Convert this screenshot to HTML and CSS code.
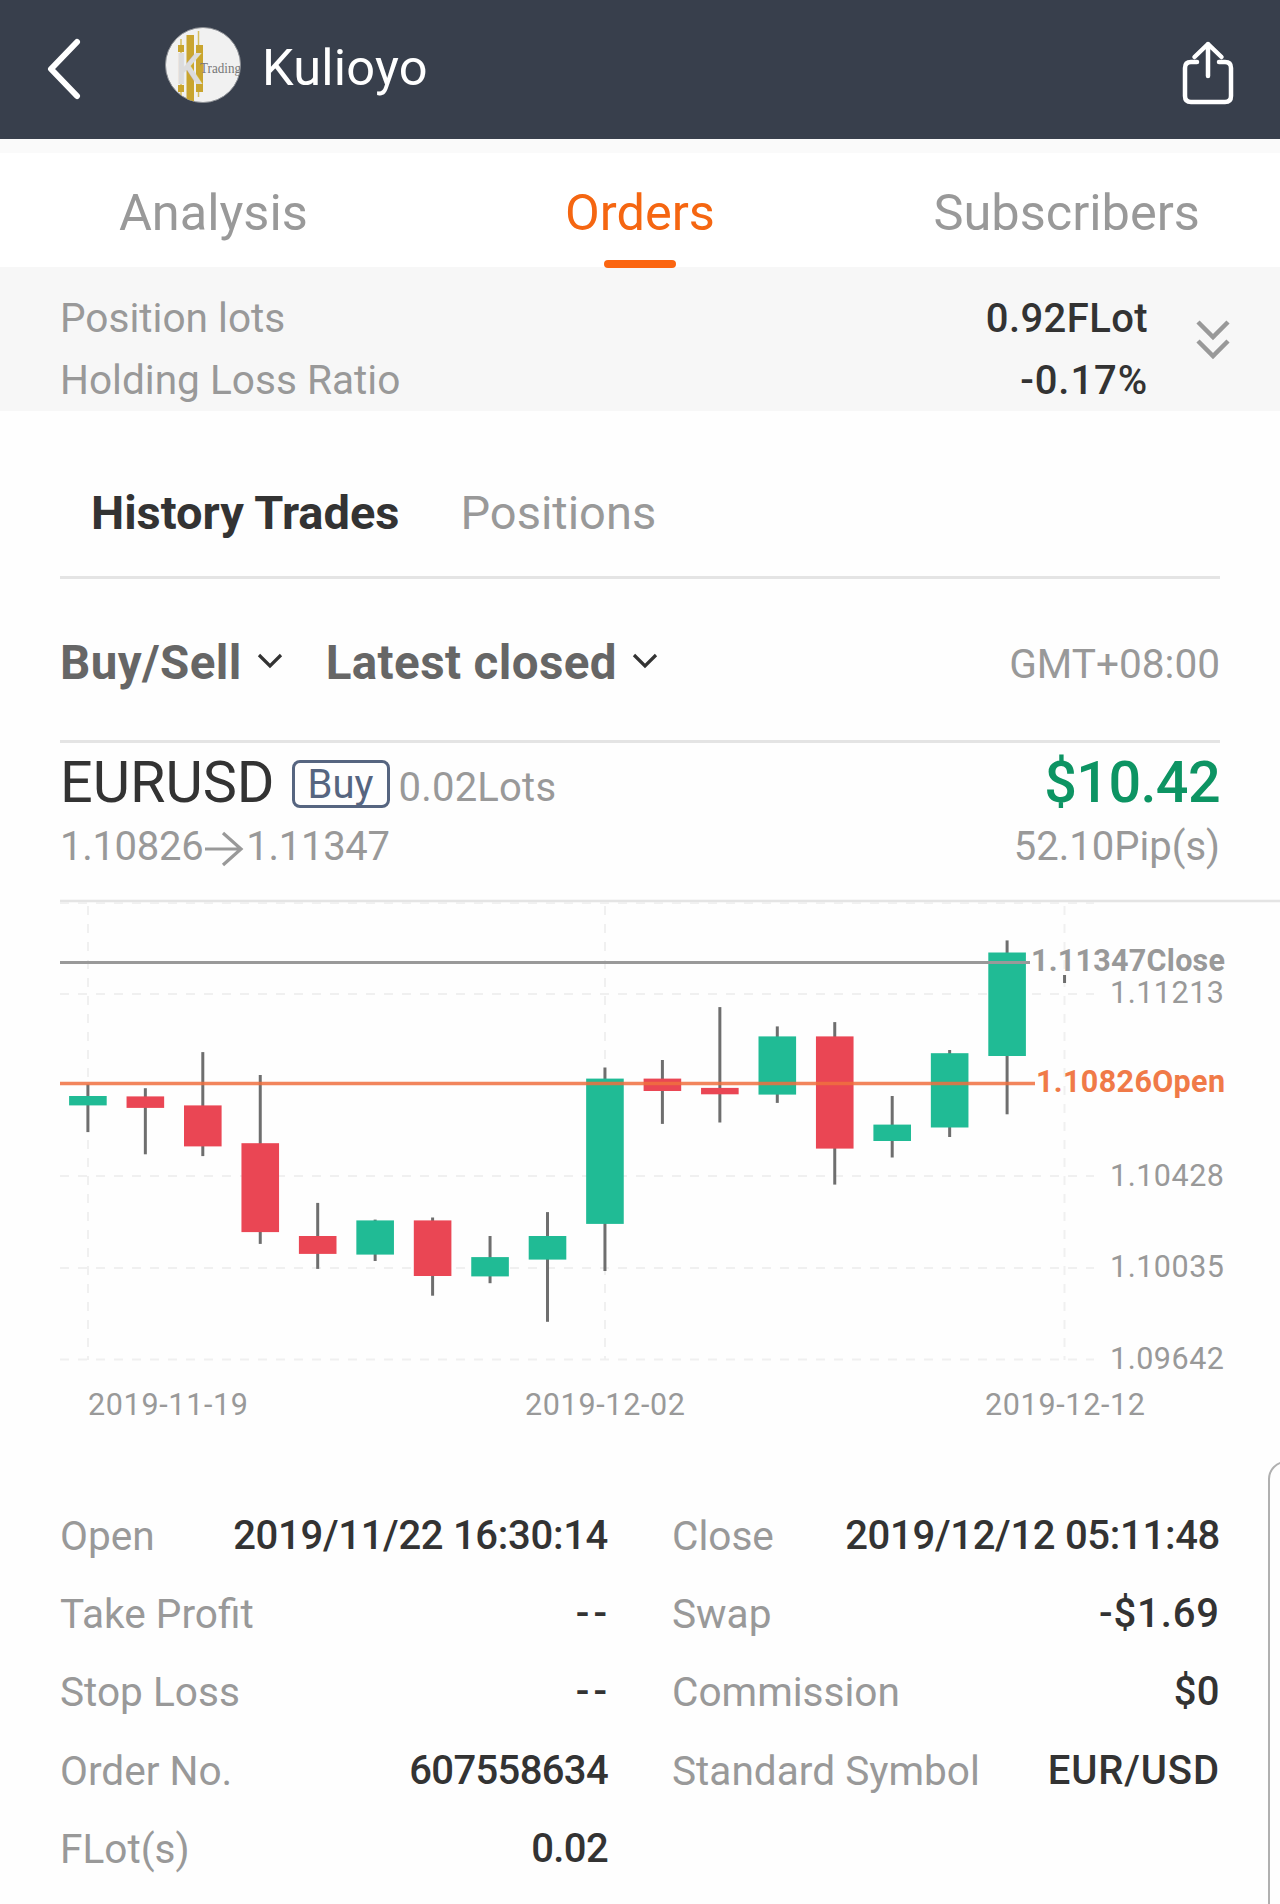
FILE: index.html
```html
<!DOCTYPE html>
<html lang="en">
<head>
    <meta charset="UTF-8">
    <meta name="viewport" content="width=device-width, initial-scale=1.0">
    <title>Kulioyo - Orders</title>
    <link rel="stylesheet" href="styles.css">
</head>
<body>

<!-- Top bar -->
<header class="topbar">
    <svg class="back" width="36" height="64" viewBox="0 0 36 64">
        <path d="M32 5 L6 32 L32 59"/>
    </svg>
    <svg class="avatar" width="78" height="78" viewBox="-1 -1 78 78">
        <defs>
            <clipPath id="round"><circle cx="38" cy="38" r="37.5"/></clipPath>
        </defs>
        <circle class="avatar-bg" cx="38" cy="38" r="37.5"/>
        <g clip-path="url(#round)">
            <path class="avatar-wick" d="M16 12 V70 M33.5 4 V70"/>
            <path class="avatar-gold" d="M13 18h6v7h-6z M13 58h6v7h-6z M21.500 8h7.500v68h-7.500z M31 18h7v47h-7z"/>
            <text class="avatar-k" x="11" y="57" textLength="27" lengthAdjust="spacingAndGlyphs">K</text>
            <text class="avatar-word" x="35" y="46" textLength="41" lengthAdjust="spacingAndGlyphs">Trading</text>
        </g>
    </svg>
    <h1>Kulioyo</h1>
    <svg class="share" width="52" height="66" viewBox="0 0 52 66">
        <path d="M15 22 H9 Q3 22 3 28 V56 Q3 62 9 62 H43 Q49 62 49 56 V28 Q49 22 43 22 H37"/>
        <path d="M26 4 V36 M12.500 17 L26 4 L39.500 17"/>
    </svg>
</header>

<!-- Main tabs -->
<nav class="tabs">
    <a class="tab">Analysis</a>
    <a class="tab active">Orders</a>
    <a class="tab">Subscribers</a>
</nav>

<!-- Account summary -->
<section class="summary">
    <div class="summary-rows">
        <div class="row"><span>Position lots</span><b class="num flot">0.92FLot</b></div>
        <div class="row"><span>Holding Loss Ratio</span><b class="num loose">-0.17%</b></div>
    </div>
    <svg class="expand" width="34" height="44" viewBox="0 0 34 44">
        <path d="M2 4 L17 19 L32 4 M2 23 L17 38 L32 23"/>
    </svg>
</section>

<div class="subtabs">
    <span class="subtab active">History Trades</span>
    <span class="subtab">Positions</span>
</div>

<div class="filters">
    <span class="filter type">Buy/Sell</span>
    <svg class="caret" width="26" height="18" viewBox="0 0 26 18"><path d="M2 2 L13 13 L24 2"/></svg>
    <span class="filter sort">Latest closed</span>
    <svg class="caret" width="26" height="18" viewBox="0 0 26 18"><path d="M2 2 L13 13 L24 2"/></svg>
    <span class="zone">GMT+08:00</span>
</div>

<!-- Order -->
<section class="order">
    <div class="order-main">
        <span class="symbol">EURUSD</span>
        <span class="side">Buy</span>
        <span class="lots">0.02Lots</span>
        <span class="profit">$10.42</span>
    </div>
    <div class="order-sub">
        <span class="price">1.10826</span>
        <svg class="arrow" width="40" height="36" viewBox="0 0 40 36"><path d="M1 18 H37 M19 2 L37 18 L19 34"/></svg>
        <span class="price">1.11347</span>
        <span class="pips">52.10Pip(s)</span>
    </div>
</section>

<svg class="chart" width="1280" height="541" viewBox="0 899 1280 541">
    <path class="edge" d="M60 901 H1280"/>
    <path class="grid" d="M60 903 H1094 M60 994 H1094 M60 1176 H1094 M60 1268 H1094 M60 1359.500 H1094"/>
    <path class="grid" d="M88 906 V1360 M605 906 V1360 M1064.500 906 V1360"/>
    <g id="candles"></g>
    <path class="close-line" d="M60 962.500 H1030"/>
    <path class="open-line" d="M60 1083.600 H1035"/>

    <text class="tag close" x="1031" y="971" textLength="194">1.11347Close</text>
    <text class="tag open" x="1036" y="1092" textLength="189">1.10826Open</text>

    <text x="1110" y="1002.500" textLength="114">1.11213</text>
    <text x="1110" y="1185.500" textLength="114">1.10428</text>
    <text x="1110" y="1277" textLength="114">1.10035</text>
    <text x="1110" y="1368.500" textLength="114">1.09642</text>

    <text x="88" y="1415" textLength="160">2019-11-19</text>
    <text x="525" y="1415" textLength="160">2019-12-02</text>
    <text x="985" y="1415" textLength="160">2019-12-12</text>
</svg>

<!-- Order details -->
<section class="details">
    <div class="col">
        <div class="row"><span>Open</span><b class="num">2019/11/22 16:30:14</b></div>
        <div class="row"><span>Take Profit</span><b class="num dash">--</b></div>
        <div class="row"><span>Stop Loss</span><b class="num dash">--</b></div>
        <div class="row"><span>Order No.</span><b class="num tight">607558634</b></div>
        <div class="row"><span>FLot(s)</span><b class="num tight">0.02</b></div>
    </div>
    <div class="col">
        <div class="row"><span>Close</span><b class="num">2019/12/12 05:11:48</b></div>
        <div class="row"><span>Swap</span><b class="num loose">-$1.69</b></div>
        <div class="row"><span>Commission</span><b class="num flot">$0</b></div>
        <div class="row"><span>Standard Symbol</span><b class="num loose">EUR/USD</b></div>
    </div>
</section>

<div class="edge-panel"></div>

<script>
    // [direction, body top, body bottom, wick top, wick bottom]
    const candles = [
        ["up", 1096, 1105.4, 1084.3, 1132.1],
        ["down", 1096.4, 1107.9, 1088.2, 1154.3],
        ["down", 1105.4, 1146.4, 1052.1, 1156.1],
        ["down", 1143.2, 1232.1, 1075, 1243.9],
        ["down", 1236, 1253.9, 1202.9, 1268.9],
        ["up", 1220.4, 1254.6, 1219.6, 1261],
        ["down", 1220.4, 1276, 1217.5, 1295.7],
        ["up", 1257.1, 1276.4, 1236, 1283.2],
        ["up", 1236, 1259.6, 1212.1, 1321.8],
        ["up", 1078.6, 1223.9, 1067.5, 1271],
        ["down", 1078.6, 1091, 1060, 1123.9],
        ["down", 1087.9, 1094.3, 1007.1, 1122.5],
        ["up", 1036.4, 1094.6, 1026.4, 1102.9],
        ["down", 1036.4, 1148.6, 1022.1, 1184.6],
        ["up", 1124.6, 1141, 1096, 1157.5],
        ["up", 1053.2, 1127.5, 1050, 1137],
        ["up", 952.5, 1056, 940.4, 1114.3],
        ["up", 975, 975, 975, 983]
    ];

    document.querySelector("#candles").innerHTML = candles.map(([dir, top, bottom, high, low], i) => {
        const x = 87.9 + i * 57.45;
        return `
            <path class="wick" d="M${x} ${high} V${low}"/>
            <rect class="${dir}" x="${x - 18.8}" y="${top}" width="37.6" height="${bottom - top}"/>
        `;
    }).join('');
</script>

</body>
</html>
```
FILE: styles.css
```css
* {
    box-sizing: border-box;
    margin: 0;
    padding: 0;
}

:root {
    --bar: #383f4c;
    --orange: #f56611;
    --dark: #333333;
    --grey: #999999;
    --line: #e4e4e4;
    --green: #0d9463;
}

body {
    width: 1280px;
    height: 1904px;
    overflow: hidden;
    position: relative;
    background: #fefefe;
    color: var(--grey);
    font-family: Roboto, "Liberation Sans", sans-serif;
    font-size: 40.6px;
}

svg {
    display: block;
    flex: none;
}

svg path {
    fill: none;
}

/* Top bar */
.topbar {
    height: 139px;
    padding: 0 46px 0 45px;
    display: flex;
    align-items: center;
    background: var(--bar);
    color: #fff;
}

.back {
    margin-top: -2px;
}

.back path {
    stroke: #fff;
    stroke-width: 6;
    stroke-linecap: round;
    stroke-linejoin: round;
}

.avatar {
    margin: -10px 0 0 83px;
}

.avatar-bg {
    fill: #f1f1f1;
    stroke: #8b8e93;
}

.avatar .avatar-wick {
    stroke: #d5bd5c;
    stroke-width: 1.5;
}

.avatar .avatar-gold {
    fill: #c9a52f;
}

.avatar-k {
    font: bold 45px "Liberation Sans", sans-serif;
    fill: #dcdcdd;
}

.avatar-word {
    font: 14px "Liberation Serif", serif;
    fill: #777;
}

.topbar h1 {
    margin: -4px auto 0 20px;
    font-size: 50.5px;
    font-weight: 400;
    letter-spacing: 0.2px;
}

.share {
    margin-top: 7px;
}

.share path {
    stroke: #fff;
    stroke-width: 4.5;
    stroke-linecap: round;
    stroke-linejoin: round;
}

/* Tabs */
.tabs {
    height: 128px;
    padding-top: 6px;
    border-top: 14px solid #fafafa;
    display: grid;
    grid-template-columns: repeat(3, 1fr);
    background: #fff;
    font-size: 50.5px;
    line-height: 108px;
    text-align: center;
}

.tab {
    position: relative;
}

.tab.active {
    color: var(--orange);
}

.tab.active::after {
    content: "";
    position: absolute;
    left: 50%;
    bottom: -1px;
    width: 72px;
    height: 8px;
    margin-left: -36px;
    border-radius: 4px;
    background: #fb6510;
}

/* Summary */
.summary {
    height: 144px;
    padding: 21px 50px 0 60px;
    display: flex;
    background: #f7f7f7;
}

.summary-rows {
    width: 1088px;
    line-height: 61.5px;
}

.row {
    display: flex;
    justify-content: space-between;
    white-space: nowrap;
}

.num {
    color: var(--dark);
    font-size: 40px;
    font-weight: 500;
    letter-spacing: -0.3px;
}

.num.flot {
    letter-spacing: 0.4px;
}

.num.loose {
    letter-spacing: 0.9px;
}

.num.tight {
    letter-spacing: -0.65px;
}

.num.dash {
    margin-right: -3px;
    letter-spacing: 4px;
}

.expand {
    margin: 30px 0 0 auto;
}

.expand path {
    stroke: #999;
    stroke-width: 4.5;
}

/* History / positions switch */
.subtabs {
    height: 168px;
    margin: 0 60px;
    padding: 72px 0 0 31px;
    border-bottom: 3px solid var(--line);
    display: flex;
    gap: 61px;
    font-size: 47px;
    line-height: 60px;
}

.subtab.active {
    color: var(--dark);
    font-weight: 700;
}

/* Filters */
.filters {
    height: 164px;
    margin: 0 60px;
    padding-top: 54px;
    border-bottom: 3px solid var(--line);
    display: flex;
    line-height: 60px;
}

.filter {
    color: #666;
    font-size: 47.5px;
    font-weight: 700;
    letter-spacing: 0.4px;
}

.filter.sort {
    margin-left: 43px;
}

.caret {
    margin: 20px 0 0 15px;
}

.caret path {
    stroke: #333;
    stroke-width: 3.2;
}

.zone {
    padding-top: 1px;
    margin-left: auto;
}

/* Order heading */
.order {
    height: 156px;
    padding: 10px 60px 0;
}

.order-main,
.order-sub {
    display: flex;
}

.order-main {
    line-height: 60px;
}

.symbol {
    color: var(--dark);
    font-size: 57.5px;
}

.side {
    width: 98px;
    height: 48px;
    margin: 7px 9px 0 17px;
    border: 3px solid #566580;
    border-radius: 8px;
    color: #566580;
    font-size: 40px;
    line-height: 43px;
    text-align: center;
}

.lots {
    padding-top: 5px;
    font-size: 40px;
    letter-spacing: 0.2px;
}

.profit {
    margin-left: auto;
    color: var(--green);
    font-size: 57.5px;
    font-weight: 500;
    letter-spacing: -0.6px;
}

.order-sub {
    margin-top: 1px;
    font-size: 40px;
    line-height: 56px;
}

.price {
    letter-spacing: -0.3px;
}

.arrow {
    margin: 12px 2px 0 1px;
}

.arrow path {
    stroke: #999;
    stroke-width: 3.2;
}

.pips {
    margin-left: auto;
}

/* Chart */
.chart text {
    fill: #999;
    font-size: 30.5px;
}

.chart .tag {
    font-weight: 700;
}

.chart .tag.open {
    fill: #f07a48;
}

.edge {
    stroke: var(--line);
    stroke-width: 2.5;
}

.grid {
    stroke: #f0f0f0;
    stroke-width: 2;
    stroke-dasharray: 9 9;
}

.wick {
    stroke: #6e6e6e;
    stroke-width: 3;
}

.up {
    fill: #20bb95;
}

.down {
    fill: #ea4654;
}

.close-line {
    stroke: #999;
    stroke-width: 3;
}

.open-line {
    stroke: #f07040;
    stroke-opacity: 0.85;
    stroke-width: 3.5;
}

/* Details */
.details {
    padding: 57px 60px 0;
    display: grid;
    grid-template-columns: 1fr 1fr;
    column-gap: 64px;
    line-height: 78.2px;
}

.edge-panel {
    position: absolute;
    top: 1461px;
    right: -30px;
    width: 42px;
    height: 500px;
    border: 2px solid #b0b0b0;
    border-radius: 18px;
    background: #fefefe;
}
```
